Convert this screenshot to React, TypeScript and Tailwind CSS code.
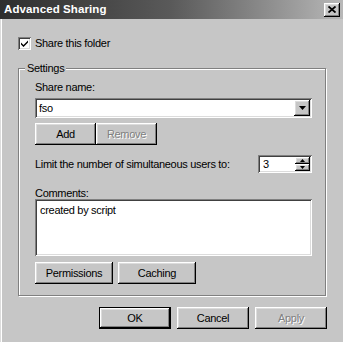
import React from "react";

const raised =
  "bg-[#c6c6c6] shadow-[inset_-1px_-1px_#000,inset_1px_1px_#fff,inset_-2px_-2px_#808080,inset_2px_2px_#dcdcdc]";
const sunken =
  "bg-white shadow-[inset_1px_1px_#808080,inset_-1px_-1px_#fff,inset_2px_2px_#404040,inset_-2px_-2px_#dcdcdc]";
const disabledText = "text-[#808080] [text-shadow:1px_1px_#fff]";

const Button: React.FC<{
  label: string;
  width: string;
  disabled?: boolean;
  isDefault?: boolean;
}> = ({ label, width, disabled, isDefault }) => {
  if (isDefault) {
    return (
      <div className={`${width} h-[22px] border border-black`}>
        <div className={`${raised} w-full h-full flex items-center justify-center`}>
          {label}
        </div>
      </div>
    );
  }
  return (
    <div
      className={`${raised} ${width} h-[22px] flex items-center justify-center ${
        disabled ? disabledText : ""
      }`}
    >
      {label}
    </div>
  );
};

const Arrow: React.FC<{ up?: boolean; size?: number }> = ({ up, size = 7 }) => (
  <svg width={size} height={Math.ceil(size / 2)} viewBox={`0 0 ${size} ${Math.ceil(size / 2)}`}>
    <polygon
      points={
        up
          ? `${size / 2},0 ${size},${Math.ceil(size / 2)} 0,${Math.ceil(size / 2)}`
          : `0,0 ${size},0 ${size / 2},${Math.ceil(size / 2)}`
      }
      fill="#000"
    />
  </svg>
);

export default function App() {
  return (
    <div className="w-[343px] h-[342px] overflow-hidden bg-[#c6c6c6] text-black text-[11px] leading-[13px] tracking-[-0.3px] font-['Liberation_Sans',Arial,sans-serif] shadow-[inset_1px_0_#dcdcdc,inset_2px_0_#fff]">
      {/* Title bar */}
      <div className="h-[19px] flex items-center justify-between pl-[4px] pr-[3px] bg-gradient-to-r from-[#2e2e2e] via-[#5a5a5a] to-[#b8b8b8]">
        <span className="text-white font-bold text-[11.5px] tracking-[0.1px]">Advanced Sharing</span>
        <div className={`${raised} w-[16px] h-[14px] flex items-center justify-center`}>
          <svg width="8" height="7" viewBox="0 0 8 7">
            <path d="M0.5 0.5 L7.5 6.5 M7.5 0.5 L0.5 6.5" stroke="#000" strokeWidth="1.8" />
          </svg>
        </div>
      </div>

      <div className="pl-[18px]">
        {/* Share this folder */}
        <div className="mt-[18px] flex items-center gap-[4px]">
          <div className={`${sunken} w-[13px] h-[13px] flex items-center justify-center`}>
            <svg width="7" height="7" viewBox="0 0 7 7">
              <path d="M0 2.5 L2.5 5 L7 0.5 L7 2.5 L2.5 7 L0 4.5 Z" fill="#000" />
            </svg>
          </div>
          <span>Share this folder</span>
        </div>

        {/* Settings group */}
        <div className="relative mt-[18px] w-[308px] h-[228px] border border-[#808080] shadow-[inset_1px_1px_#fff,1px_1px_#fff] pl-[16px] pt-[12px]">
          <span className="absolute left-[6px] top-[-7px] px-[2px] bg-[#c6c6c6]">Settings</span>

          <div>Share name:</div>
          <div className={`${sunken} mt-[4px] w-[277px] h-[20px] flex items-center justify-between pl-[4px] pr-[2px]`}>
            <span>fso</span>
            <div className={`${raised} w-[16px] h-[16px] flex items-center justify-center`}>
              <Arrow />
            </div>
          </div>

          <div className="mt-[5px] flex">
            <Button label="Add" width="w-[61px]" />
            <Button label="Remove" width="w-[61px]" disabled />
          </div>

          <div className="mt-[10px] w-[277px] flex items-center justify-between">
            <span>Limit the number of simultaneous users to:</span>
            <div className={`${sunken} w-[54px] h-[18px] flex items-center justify-between pl-[5px] pr-[2px]`}>
              <span>3</span>
              <div className="flex flex-col">
                <div className={`${raised} w-[15px] h-[7px] flex items-center justify-center`}>
                  <Arrow up size={5} />
                </div>
                <div className={`${raised} w-[15px] h-[7px] flex items-center justify-center`}>
                  <Arrow size={5} />
                </div>
              </div>
            </div>
          </div>

          <div className="mt-[14px] leading-[12px]">Comments:</div>
          <div className={`${sunken} w-[277px] h-[57px] pl-[5px] pt-[5px]`}>created by script</div>

          <div className="mt-[6px] flex gap-[5px]">
            <Button label="Permissions" width="w-[78px]" />
            <Button label="Caching" width="w-[78px]" />
          </div>
        </div>
      </div>

      {/* Dialog buttons */}
      <div className="mt-[11px] pr-[16px] flex justify-end gap-[6px]">
        <Button label="OK" width="w-[72px]" isDefault />
        <Button label="Cancel" width="w-[72px]" />
        <Button label="Apply" width="w-[72px]" disabled />
      </div>
    </div>
  );
}
